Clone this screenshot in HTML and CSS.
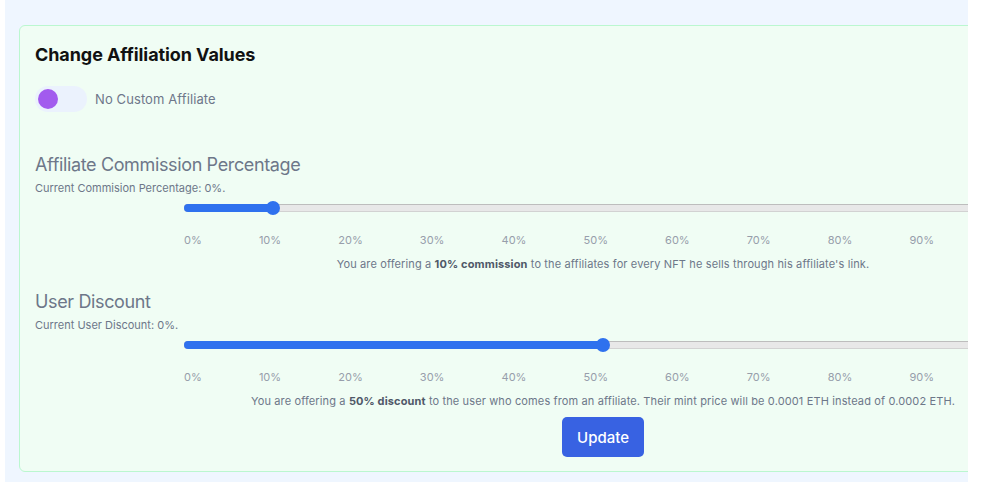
FILE: index.html
```html
<!DOCTYPE html>
<html lang="en">
<head>
<meta charset="utf-8">
<title>Change Affiliation Values</title>
<link rel="stylesheet" href="styles.css">
</head>
<body>
<div class="frame">
  <section class="card">
    <h2 class="title">Change Affiliation Values</h2>
    <div class="toggle-row">
      <span class="toggle"><span class="knob"></span></span>
      <span class="toggle-label">No Custom Affiliate</span>
    </div>

    <div class="section">
      <h3 class="heading">Affiliate Commission Percentage</h3>
      <p class="current">Current Commision Percentage: 0%.</p>
      <div class="slider">
        <div class="track"></div>
        <div class="fill" style="width: 89px"></div>
        <div class="thumb" style="left: 82px"></div>
      </div>
      <div class="ticks">
        <span>0%</span><span>10%</span><span>20%</span><span>30%</span><span>40%</span><span>50%</span><span>60%</span><span>70%</span><span>80%</span><span>90%</span>
      </div>
      <p class="desc">You are offering a <b>10% commission</b> to the affiliates for every NFT he sells through his affiliate's link.</p>
    </div>

    <div class="section">
      <h3 class="heading">User Discount</h3>
      <p class="current">Current User Discount: 0%.</p>
      <div class="slider">
        <div class="track"></div>
        <div class="fill" style="width: 419px"></div>
        <div class="thumb" style="left: 412px"></div>
      </div>
      <div class="ticks">
        <span>0%</span><span>10%</span><span>20%</span><span>30%</span><span>40%</span><span>50%</span><span>60%</span><span>70%</span><span>80%</span><span>90%</span>
      </div>
      <p class="desc">You are offering a <b>50% discount</b> to the user who comes from an affiliate. Their mint price will be 0.0001 ETH instead of 0.0002 ETH.</p>
    </div>

    <div class="actions">
      <button class="btn" type="button">Update</button>
    </div>
  </section>
</div>
</body>
</html>
```

FILE: styles.css
```css
* { box-sizing: border-box; }

html, body {
  margin: 0;
  padding: 0;
  background: #ffffff;
}

body {
  font-family: Inter, "Noto Sans", sans-serif;
}

.frame {
  margin-left: 5px;
  width: 963px;
  height: 482px;
  overflow: hidden;
  background: #eff6ff;
  padding: 25px 0 0 14px;
}

.card {
  width: 1168px;
  background: #f0fdf4;
  border: 1px solid #bbf7d0;
  border-radius: 6px;
  padding: 17px 15px 14px;
}

.title {
  margin: 0;
  font-size: 18px;
  line-height: 24px;
  font-weight: 700;
  color: #111111;
  letter-spacing: -0.08px;
}

.toggle-row {
  display: flex;
  align-items: center;
  gap: 8px;
  margin-top: 19px;
  height: 26px;
}

.toggle {
  display: flex;
  align-items: center;
  width: 52px;
  height: 26px;
  border-radius: 13px;
  background: #ebf2fd;
  padding-left: 3px;
}

.knob {
  width: 20px;
  height: 20px;
  border-radius: 50%;
  background: #a25bee;
}

.toggle-label {
  font-size: 13px;
  line-height: 26px;
  color: #6e778a;
  letter-spacing: 0.1px;
}

.section {
  margin-top: 41px;
}

.section + .section {
  margin-top: 18px;
}

.heading {
  margin: 0;
  font-size: 18px;
  line-height: 24px;
  font-weight: 400;
  color: #6d7789;
  letter-spacing: -0.36px;
}

.current {
  margin: 3px 0 0;
  font-size: 11px;
  line-height: 16px;
  color: #6d7789;
}

.slider {
  position: relative;
  width: 838px;
  height: 14px;
  margin: 5px auto 0;
}

.track {
  position: absolute;
  left: 0;
  right: 0;
  top: 3px;
  height: 8px;
  border-radius: 4px;
  background: #e8e8e8;
  box-shadow: inset 0 1px 0 #bdbdbd, inset 0 -1px 0 #d2d2d2;
}

.fill {
  position: absolute;
  left: 0;
  top: 3px;
  height: 8px;
  border-radius: 4px;
  background: #2f71ee;
}

.thumb {
  position: absolute;
  top: 0;
  width: 14px;
  height: 14px;
  border-radius: 50%;
  background: #2f71ee;
}

.ticks {
  display: flex;
  justify-content: space-between;
  width: 838px;
  margin: 17px auto 0;
  padding-right: 88px;
  font-size: 11px;
  line-height: 16px;
  color: #979eab;
}

.desc {
  margin: 8px 0 0;
  text-align: center;
  font-size: 11px;
  line-height: 16px;
  color: #6d7789;
  letter-spacing: 0.13px;
}

.desc b {
  font-weight: 700;
  color: #4f5868;
}

.actions {
  display: flex;
  justify-content: center;
  margin-top: 8px;
}

.btn {
  width: 82px;
  height: 40px;
  border: 0;
  border-radius: 5px;
  background: #3862e2;
  color: #ffffff;
  font-family: Inter, "Noto Sans", sans-serif;
  font-size: 15px;
  font-weight: 500;
}
```
